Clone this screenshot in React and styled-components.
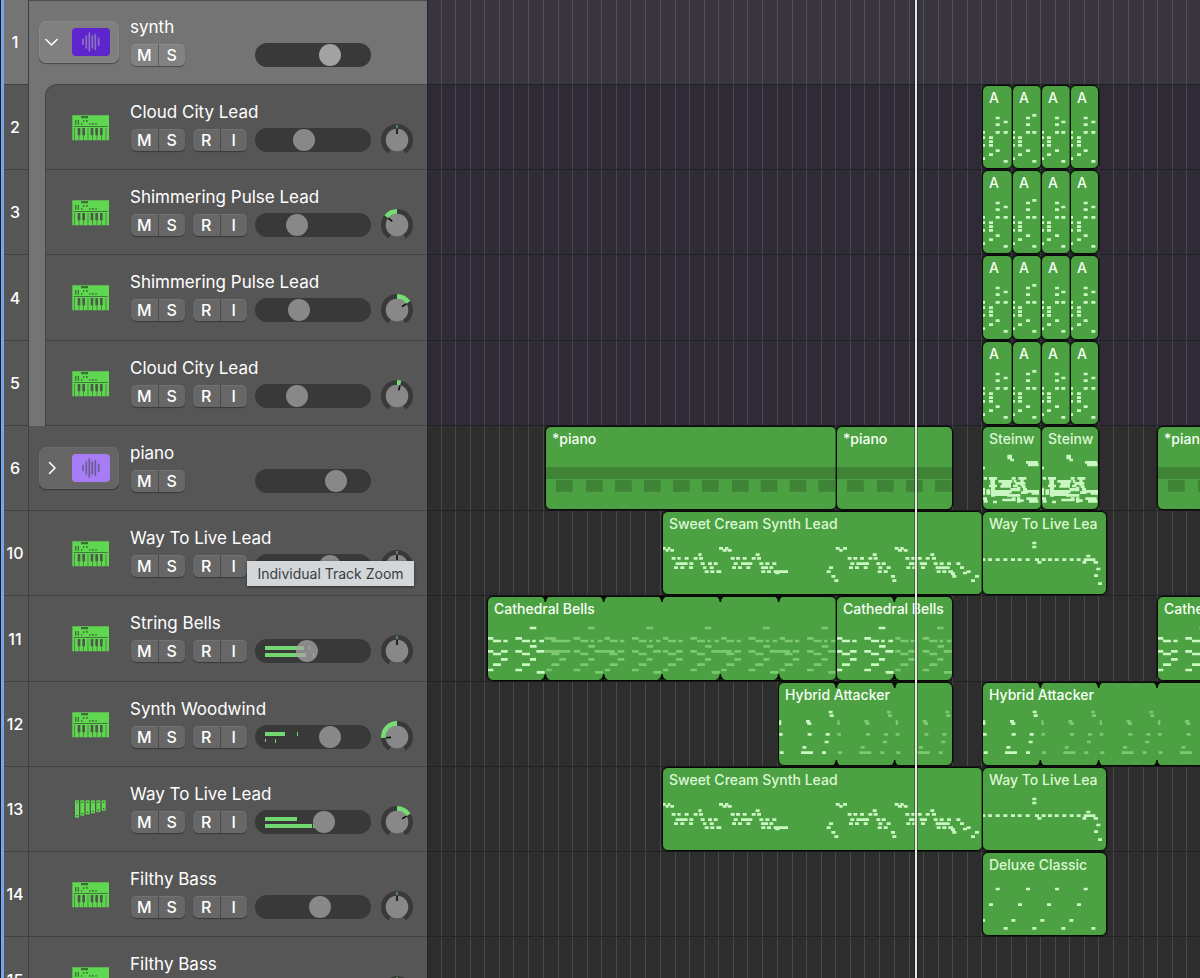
import React from "react";
import styled, { createGlobalStyle, css } from "styled-components";

const GlobalStyle = createGlobalStyle`
  *, *::before, *::after { box-sizing: border-box; }
  body {
    margin: 0;
    background: #2d2d2d;
    font-family: Inter, "Liberation Sans", sans-serif;
    color: #fff;
  }
`;

/* ---------- layout ---------- */

const Workspace = styled.main`
  display: flex;
  height: 100vh;
  overflow: hidden;
`;

const TrackList = styled.section`
  flex: none;
  width: 428px;
  border-left: 1px solid #1c1c1c;
  border-right: 1px solid #262626;
  background: #565656;
`;

const rowHeight = css`
  height: 85px;
  &:nth-child(4n) {
    height: 86px;
  }
`;

const TrackRow = styled.div`
  ${rowHeight}
  position: relative;
  display: flex;
  border-left: 3px solid #78a4ec;
`;

const TrackNumber = styled.div`
  display: flex;
  align-items: center;
  justify-content: center;
  width: 25px;
  padding-right: 2px;
  border-right: 1px solid #404040;
  border-bottom: 1px solid #404040;
  background: ${(p) => (p.$selected ? "#747474" : "#565656")};
  font-size: 16px;
  font-weight: 500;
`;

const TrackBody = styled.div`
  flex: 1;
  display: flex;
  padding-left: ${(p) => (p.$nested ? 16 : 0)}px;
  background: ${(p) => (p.$selected || p.$nested ? "#747474" : "#565656")};
  box-shadow: ${(p) => (p.$selected ? "inset 0 2px 1px -1px #4a4a4a" : "none")};
`;

const TrackPanel = styled.div`
  flex: 1;
  display: flex;
  border-bottom: ${(p) => (p.$selected ? "none" : "1px solid #404040")};
  ${(p) =>
    p.$nested &&
    css`
      border-left: 1px solid #444;
      background: #565656;
    `}
  ${(p) =>
    p.$first &&
    css`
      margin-top: -1px;
      border-top: 1px solid #444;
      border-top-left-radius: 12px;
    `}
`;

const IconSlot = styled.div`
  flex: none;
  width: ${(p) => (p.$nested ? 84 : 101)}px;
  padding-top: ${(p) => (p.$stack ? 21 : 30)}px;
  padding-left: ${(p) => (p.$stack ? 10 : p.$nested ? 26 : 43)}px;
`;

const TrackInfo = styled.div`
  padding-top: 15px;
`;

const TrackName = styled.div`
  height: 24px;
  font-size: 17px;
  line-height: 24px;
  white-space: nowrap;
`;

const Controls = styled.div`
  display: grid;
  grid-template-columns: 54px 54px 116px 36px;
  column-gap: 8px;
  align-items: center;
  height: 32px;
  padding-left: 1px;
`;

const ButtonPair = styled.div`
  display: flex;
  height: 22px;
  border-radius: 5px;
  overflow: hidden;
  background: ${(p) => (p.$selected ? "#828282" : "#676767")};
  box-shadow: 0 1px 1px rgba(0, 0, 0, 0.35), inset 0 1px 0 rgba(255, 255, 255, 0.08);
`;

const PairButton = styled.button`
  flex: 1;
  padding: 0;
  border: 0;
  background: transparent;
  color: #fff;
  font-family: inherit;
  font-size: 16px;
  font-weight: 500;
  line-height: 22px;
  & + & {
    border-left: 1px solid rgba(0, 0, 0, 0.28);
  }
`;

const StackButton = styled.button`
  display: flex;
  align-items: center;
  gap: 13px;
  width: 80px;
  height: 42px;
  padding: 0 0 0 5px;
  border: 1px solid ${(p) => (p.$selected ? "#898989" : "#6d6d6d")};
  border-radius: 7px;
  background: ${(p) => (p.$selected ? "#808080" : "#656565")};
  box-shadow: 0 1px 1px rgba(0, 0, 0, 0.4);
`;

const StackTile = styled.span`
  display: flex;
  align-items: center;
  justify-content: center;
  width: 38px;
  height: 28px;
  border-radius: 4px;
  background: ${(p) => p.$color};
`;

const FaderTrack = styled.div`
  grid-column: 3;
  position: relative;
  height: 24px;
  border-radius: 12px;
  background: #393939;
`;

const Meter = styled.svg`
  position: absolute;
  top: 0;
  left: 0;
`;

const Fader = styled.input`
  position: relative;
  display: block;
  width: 100%;
  height: 24px;
  margin: 0;
  appearance: none;
  background: transparent;
  &::-webkit-slider-thumb {
    appearance: none;
    width: 22px;
    height: 22px;
    border-radius: 50%;
    background: ${(p) => (p.$selected ? "#a2a2a2" : p.$sheer ? "rgba(165,165,165,.75)" : "#888")};
  }
`;

const KnobSvg = styled.svg`
  display: block;
  margin: 0 auto;
`;

const Tooltip = styled.div`
  position: absolute;
  z-index: 2;
  top: 50px;
  left: 243px;
  width: 167px;
  height: 25px;
  background: #d3d7d9;
  box-shadow: 0 1px 3px rgba(0, 0, 0, 0.45);
  color: #3a3d3f;
  font-size: 14px;
  line-height: 25px;
  text-align: center;
  white-space: nowrap;
`;

/* ---------- timeline ---------- */

const Timeline = styled.section`
  position: relative;
  flex: 1;
  min-width: 0;
  overflow: hidden;
`;

const laneColors = { selected: "#38353f", stack: "#2e2a36", plain: "#2d2d2d" };

const Lane = styled.div`
  ${rowHeight}
  position: relative;
  border-bottom: 1px solid #222126;
  background-color: ${(p) => laneColors[p.$tone]};
  background-image: linear-gradient(
    90deg,
    ${[0, 15, 30, 45, 59, 74, 88, 103]
      .map(
        (x) =>
          `transparent ${x}px, rgba(255,255,255,.13) ${x}px, rgba(255,255,255,.13) ${x + 1}px, transparent ${x + 1}px`
      )
      .join(", ")}
  );
  background-size: 117px 100%;
  background-position-x: 85px;
`;

const Clip = styled.article`
  position: absolute;
  top: 0;
  bottom: 0;
  border: 1px solid #060b05;
  border-radius: 6px;
  box-shadow: 0 0 0 1px rgba(0, 0, 0, 0.35);
  overflow: hidden;
  background: #4ca142;
`;

const ClipLabel = styled.div`
  position: relative;
  padding: 2px 0 0 6px;
  color: ${(p) => (p.$tinted ? "#dcf8d4" : "#f6fff4")};
  font-size: 14px;
  font-weight: 500;
  line-height: 20px;
  white-space: nowrap;
`;

const ClipArt = styled.svg`
  position: absolute;
  top: 0;
  left: 0;
  width: 100%;
  height: 100%;
`;

const Playhead = styled.div`
  position: absolute;
  top: 0;
  bottom: 0;
  left: 487px;
  width: 2px;
  background: #e6e6e6;
  box-shadow: 0 0 0 1px rgba(0, 0, 0, 0.3);
`;

/* ---------- clip drawings: units are thirds of a pixel ---------- */

const NOTE_H = 8;
const bright = "#c9f7c1";
const dim = "#7cc873";

const toPath = (notes) =>
  notes.map(([x, y, w = 12, h = NOTE_H]) => `M${x} ${y}h${w}v${h}h${-w}z`).join("");
const shift = (notes, dx, dy = 0) => notes.map(([x, y, w, h]) => [x + dx, y + dy, w, h]);

const arpeggio = (a, b, c, high) => [
  [0, 135, 6], [0, 151, 6], [0, 174, 6], [0, 214, 6],
  [b, 92], [c, high], [b, 112], [b, 135], [c, 135],
  [a, 151], [a, 163], [a, 174], [b, 190], [a, 202], [c, 222],
];

const sweetCream = shift(
  [
    [38, 126, 8], [46, 132, 9], [52, 126, 8], [60, 132, 11],
    [64, 156], [81, 156, 10], [103, 156], [130, 156], [144, 145, 10], [146, 156],
    [76, 172, 36], [117, 172], [151, 172], [173, 172], [190, 172],
    [71, 184], [90, 184], [116, 184], [158, 184, 10], [178, 184],
    [163, 196], [180, 196], [198, 196, 15],
    [206, 126], [217, 132], [224, 126, 10], [232, 132],
    [241, 156], [257, 156], [277, 156], [304, 156], [316, 145], [320, 156],
    [250, 172], [272, 172, 34], [327, 172], [345, 172], [366, 172],
    [245, 184], [263, 184], [288, 184], [332, 184, 10], [341, 184], [357, 184],
    [333, 196], [350, 196], [370, 196, 43], [375, 200],
    [536, 184], [529, 196], [543, 210], [552, 223],
    [556, 126], [567, 132, 10], [578, 126],
    [592, 156], [609, 156], [629, 156], [654, 156], [667, 145], [670, 156],
    [600, 172], [618, 172, 38], [678, 172], [694, 172],
    [596, 184], [614, 184], [640, 184], [684, 184], [709, 184],
    [682, 196], [700, 196], [722, 210], [726, 223],
    [733, 126], [743, 132], [750, 126, 10], [760, 132],
    [765, 156], [783, 156], [802, 156], [826, 156], [840, 145], [845, 156],
    [776, 172, 24], [808, 172, 22], [850, 172], [868, 172], [890, 172],
    [768, 184], [786, 184], [812, 184], [856, 184, 42],
    [859, 196], [876, 196], [894, 196, 14], [902, 202], [906, 210],
    [918, 172], [929, 184], [938, 200], [949, 196], [962, 223], [974, 210],
  ],
  -38,
  -21
);

const steinway = shift(
  [
    [68, 140, 6], [141, 104, 14, 14], [150, 116, 11], [197, 123, 36], [203, 130, 32, 9],
    [70, 171, 10], [86, 171, 24], [154, 171], [174, 171, 24],
    [90, 179, 14, 16], [114, 180, 42], [124, 188, 28], [160, 180, 8], [165, 186, 30], [180, 178, 10, 20],
    [86, 194, 24], [120, 195, 32], [158, 194, 14], [184, 196],
    [68, 203, 6, 22], [78, 208, 12, 16], [92, 202, 12, 28], [104, 210, 50, 10], [150, 204, 20, 10],
    [170, 200, 10, 14], [188, 204, 12, 10], [200, 210, 36],
    [104, 220, 44], [140, 222, 40], [182, 214, 20], [214, 216, 22],
    [68, 232], [70, 240], [98, 242], [126, 236, 40], [154, 232], [170, 232, 10, 16],
    [178, 238], [198, 232, 34], [206, 240, 28],
  ],
  -68,
  -21
);

const wayToLive = shift(
  [
    [216, 365], [216, 377],
    [68, 415, 7], [83, 415], [106, 415], [129, 415], [152, 415], [172, 415], [196, 415],
    [224, 415], [244, 415], [263, 415], [283, 415], [306, 415], [328, 415], [349, 415],
    [378, 404], [370, 415, 35], [366, 423], [400, 423, 13], [231, 423],
    [408, 443], [401, 463], [413, 487],
  ],
  -68,
  -276
);

const bells = shift(
  [
    [149, 110, 20], [24, 141, 16], [39, 149, 24], [70, 149, 13], [106, 141, 20], [126, 149, 24],
    [157, 149, 10], [178, 149, 14], [150, 165, 20], [24, 180, 16], [63, 180, 20], [39, 188, 24],
    [106, 180, 20], [126, 188, 24], [169, 180, 24], [63, 204, 20], [150, 204, 18],
    [39, 220, 24], [126, 220, 24], [24, 236, 16], [106, 236, 20], [170, 243, 24],
  ],
  -24,
  -21
);
const bellsTies = [
  [170, 120, 34], [195, 128, 52], [170, 159, 76], [320, 159, 60], [671, 159, 60], [846, 159, 60],
];

const attacker = shift(
  [
    [28, 136, 7, 14], [28, 174, 11], [30, 229], [98, 213], [94, 229, 36], [109, 135], [113, 142],
    [114, 174], [177, 107], [180, 118], [168, 174], [165, 197], [157, 229],
  ],
  -28,
  -24
);

const deluxe = shift(
  [
    [106, 128], [197, 128], [284, 128], [370, 128],
    [86, 175], [173, 175], [260, 175], [350, 175],
    [68, 222, 6], [153, 222], [240, 222], [327, 222],
    [130, 246], [216, 246], [303, 246], [393, 246],
  ],
  -68,
  -24
);

const LOOP = 175;
const loopsOf = (notes, count) =>
  Array.from({ length: count }, (_, i) => shift(notes, LOOP * (i + 1))).flat();

const audioBlocks = [30, 120, 207, 294, 381, 468, 558, 644, 731, 817];

/* ---------- data ---------- */

const ARP_A = [
  { left: 554, width: 31, label: "A", notes: arpeggio(18, 38, 62, 104) },
  { left: 584, width: 30, label: "A", notes: arpeggio(15, 39, 58, 84) },
  { left: 613, width: 30, label: "A", notes: arpeggio(15, 39, 58, 104) },
  { left: 642, width: 29, label: "A", notes: arpeggio(18, 38, 61, 104) },
];

const SWEET_CLIPS = [
  { left: 234, width: 321, label: "Sweet Cream Synth Lead", tinted: true, notes: sweetCream },
  { left: 554, width: 125, label: "Way To Live Lea", tinted: true, notes: wayToLive },
];

const tracks = [
  { n: 1, name: "synth", stack: "#5f25cc", wave: "#8d72c4", open: true, selected: true, tone: "selected", fader: 64, clips: [] },
  { n: 2, name: "Cloud City Lead", nested: true, first: true, fader: 38, pan: 0, clips: ARP_A },
  { n: 3, name: "Shimmering Pulse Lead", nested: true, fader: 31, pan: -52, clips: ARP_A },
  { n: 4, name: "Shimmering Pulse Lead", nested: true, fader: 33, pan: 56, clips: ARP_A },
  { n: 5, name: "Cloud City Lead", nested: true, fader: 31, pan: 16, clips: ARP_A },
  {
    n: 6, name: "piano", stack: "#a67cf7", wave: "#6c5b93", fader: 70,
    clips: [
      { left: 117, width: 292, label: "*piano", audio: true },
      { left: 408, width: 117, label: "*piano", audio: true },
      { left: 554, width: 60, label: "Steinw", tinted: true, notes: steinway },
      { left: 613, width: 58, label: "Steinw", tinted: true, notes: steinway },
      { left: 729, width: 292, label: "*piano", audio: true },
    ],
  },
  { n: 10, name: "Way To Live Lead", fader: 64, pan: 0, tip: "Individual Track Zoom", clips: SWEET_CLIPS },
  {
    n: 11, name: "String Bells", fader: 41, pan: 0, sheer: true,
    meter: [[10, 7, 39, 4], [10, 14, 41, 4], [54, 7, 1, 4], [58, 14, 1, 4]],
    clips: [
      { left: 59, width: 350, label: "Cathedral Bells", notes: bells, ghost: [...loopsOf(bells, 5), ...bellsTies], loops: 5 },
      { left: 408, width: 117, label: "Cathedral Bells", notes: bells, ghost: loopsOf(bells, 1), loops: 1 },
      { left: 729, width: 292, label: "Cathedral Bells", notes: bells, ghost: loopsOf(bells, 4), loops: 4 },
    ],
  },
  {
    n: 12, name: "Synth Woodwind", fader: 64, pan: -94,
    meter: [[10, 7, 20, 4], [42, 7, 1, 4], [10, 14, 1, 3], [20, 14, 1, 4]],
    clips: [
      { left: 350, width: 175, label: "Hybrid Attacker", notes: attacker, ghost: loopsOf(attacker, 2), loops: 2 },
      { left: 554, width: 350, label: "Hybrid Attacker", notes: attacker, ghost: loopsOf(attacker, 5), loops: 5 },
    ],
  },
  {
    n: 13, name: "Way To Live Lead", icon: "vibes", fader: 58, pan: 58,
    meter: [[10, 7, 32, 4], [10, 14, 47, 4], [58, 14, 3, 4]],
    clips: SWEET_CLIPS,
  },
  {
    n: 14, name: "Filthy Bass", fader: 54, pan: 0,
    clips: [{ left: 554, width: 125, label: "Deluxe Classic", tinted: true, notes: deluxe }],
  },
  { n: 15, name: "Filthy Bass", fader: 54, pan: 0, clips: [] },
];

/* ---------- icons ---------- */

const KeyboardIcon = () => (
  <svg width="38" height="26" viewBox="0 0 114 78" aria-hidden="true">
    <path fill="#60d750" d="M1 1h110v75H1z" />
    <path
      fill="#3f6f38"
      d="M27 3h21v7H27zM9 15h4v14H9zM17 15h4v14h-4zM27 25h4v4h-4zM33 16h4v5h-4zM42 15h5v5h-5zM52 24h4v5h-4zM60 24h5v5h-5zM70 24h4v5h-4z"
    />
    <path fill="#44773d" d="M5 33h102v3H5z" />
    <path
      fill="#4a5a47"
      d="M17 39h8v22h-8zM31 39h8v22h-8zM56 39h8v22h-8zM70 39h8v22h-8zM84 39h8v22h-8z"
    />
    <path
      fill="#486144"
      d="M6 39h2v37H6zM20 60h2v16h-2zM34 60h2v16h-2zM47 39h2v37h-2zM60 60h2v16h-2zM74 60h2v16h-2zM87 60h2v16h-2zM101 39h2v37h-2z"
    />
  </svg>
);

const vibeBars = [52, 46, 42, 39, 35, 31];

const VibesIcon = () => (
  <svg width="38" height="26" viewBox="0 0 114 78" aria-hidden="true">
    {vibeBars.map((h, i) => {
      const x = 9 + i * 16;
      return (
        <g key={h}>
          <rect x={x} y="10" width="12" height={h} fill="#60d750" />
          <path
            fill="#2f6a2a"
            d={`M${x + 4} 14h4v4h-4zM${x + 4} ${h + 2}h4v4h-4z`}
          />
        </g>
      );
    })}
  </svg>
);

const WaveIcon = ({ color }) => (
  <svg width="20" height="20" viewBox="0 0 60 60" aria-hidden="true">
    <path
      d="M6 22v15M16 12v36M25 3v54M34 12v36M43 8v44M53 19v21"
      stroke={color}
      strokeWidth="5"
      strokeLinecap="round"
    />
  </svg>
);

const Chevron = ({ open }) => (
  <svg width="14" height="14" viewBox="0 0 14 14" fill="none" stroke="#fff" strokeWidth="1.6" strokeLinecap="round" strokeLinejoin="round" aria-hidden="true">
    <path d={open ? "M1 4.500L6.500 10L12 4.500" : "M4.500 1.500L10 7L4.500 12.500"} />
  </svg>
);

const polar = (deg, r) => {
  const t = (deg * Math.PI) / 180;
  return [16 + r * Math.sin(t), 16 - r * Math.cos(t)];
};

const arc = (from, to, r) => {
  const [x1, y1] = polar(from, r);
  const [x2, y2] = polar(to, r);
  return `M${x1} ${y1}A${r} ${r} 0 ${to - from > 180 ? 1 : 0} 1 ${x2} ${y2}`;
};

const PanKnob = ({ pan }) => {
  const [from, to] = pan === 0 ? [-2, 2] : pan < 0 ? [pan, 0] : [0, pan];
  const [px, py] = polar(pan, 11);
  const [qx, qy] = polar(pan, 6);
  return (
    <KnobSvg width="32" height="32" viewBox="0 0 32 32" role="img" aria-label={`Pan ${pan}`}>
      <path d={arc(-147, 147, 13.5)} fill="none" stroke="#393939" strokeWidth="5" />
      <path d={arc(from, to, 13.5)} fill="none" stroke="#77dc76" strokeWidth={pan === 0 ? 3 : 5} />
      <circle cx="16" cy="16" r="11.300" fill="#888" />
      <path d={`M${px} ${py}L${qx} ${qy}`} stroke="#0c0c0c" strokeWidth="1.600" />
    </KnobSvg>
  );
};

/* ---------- parts ---------- */

const TrackHeader = ({ track }) => {
  const { n, name, selected, nested, first, stack, wave, open, icon, fader, pan, meter, sheer, tip } = track;
  return (
    <TrackRow>
      <TrackNumber $selected={selected}>{n}</TrackNumber>
      <TrackBody $selected={selected} $nested={nested}>
        <TrackPanel $selected={selected} $nested={nested} $first={first}>
          <IconSlot $stack={!!stack} $nested={nested}>
            {stack ? (
              <StackButton $selected={selected} aria-expanded={!!open} aria-label={`${name} stack`}>
                <Chevron open={open} />
                <StackTile $color={stack}>
                  <WaveIcon color={wave} />
                </StackTile>
              </StackButton>
            ) : icon === "vibes" ? (
              <VibesIcon />
            ) : (
              <KeyboardIcon />
            )}
          </IconSlot>
          <TrackInfo>
            <TrackName>{name}</TrackName>
            <Controls>
              <ButtonPair $selected={selected}>
                <PairButton>M</PairButton>
                <PairButton>S</PairButton>
              </ButtonPair>
              {!stack && (
                <ButtonPair>
                  <PairButton>R</PairButton>
                  <PairButton>I</PairButton>
                </ButtonPair>
              )}
              <FaderTrack>
                {meter && (
                  <Meter width="116" height="24" aria-hidden="true">
                    {meter.map(([x, y, w, h], i) => (
                      <rect key={i} x={x} y={y} width={w} height={h} fill="#73d872" />
                    ))}
                  </Meter>
                )}
                <Fader
                  type="range"
                  min="0"
                  max="94"
                  defaultValue={fader}
                  aria-label={`${name} volume`}
                  $selected={selected}
                  $sheer={sheer}
                />
              </FaderTrack>
              {!stack && <PanKnob pan={pan} />}
            </Controls>
          </TrackInfo>
        </TrackPanel>
      </TrackBody>
      {tip && <Tooltip role="tooltip">{tip}</Tooltip>}
    </TrackRow>
  );
};

const Region = ({ clip }) => (
  <Clip style={{ left: clip.left, width: clip.width }}>
    <ClipArt aria-hidden="true">
      <g transform="scale(0.33333)">
        {clip.audio && (
          <path
            fill="#3f8336"
            d={`M0 120h1200v36H0z${audioBlocks.map((x) => `M${x} 159h50v35h-50z`).join("")}`}
          />
        )}
        {clip.ghost && <path fill={dim} d={toPath(clip.ghost)} />}
        {clip.notes && <path fill={bright} d={toPath(clip.notes)} />}
        {Array.from({ length: clip.loops || 0 }, (_, i) => {
          const x = LOOP * (i + 1) - 3;
          return (
            <path
              key={i}
              fill="#060b05"
              d={`M${x - 15} -2Q${x - 3} 0 ${x - 2} 15H${x + 2}Q${x + 3} 0 ${x + 15} -2zM${x - 15} 248Q${x - 3} 246 ${x - 2} 231H${x + 2}Q${x + 3} 246 ${x + 15} 248z`}
            />
          );
        })}
      </g>
    </ClipArt>
    <ClipLabel $tinted={clip.tinted}>{clip.label}</ClipLabel>
  </Clip>
);

export default function App() {
  return (
    <>
      <GlobalStyle />
      <Workspace>
        <TrackList aria-label="Tracks">
          {tracks.map((track) => (
            <TrackHeader key={track.n} track={track} />
          ))}
        </TrackList>
        <Timeline aria-label="Arrangement">
          {tracks.map((track) => (
            <Lane key={track.n} $tone={track.tone || (track.nested ? "stack" : "plain")}>
              {track.clips.map((clip) => (
                <Region key={clip.left} clip={clip} />
              ))}
            </Lane>
          ))}
          <Playhead />
        </Timeline>
      </Workspace>
    </>
  );
}
